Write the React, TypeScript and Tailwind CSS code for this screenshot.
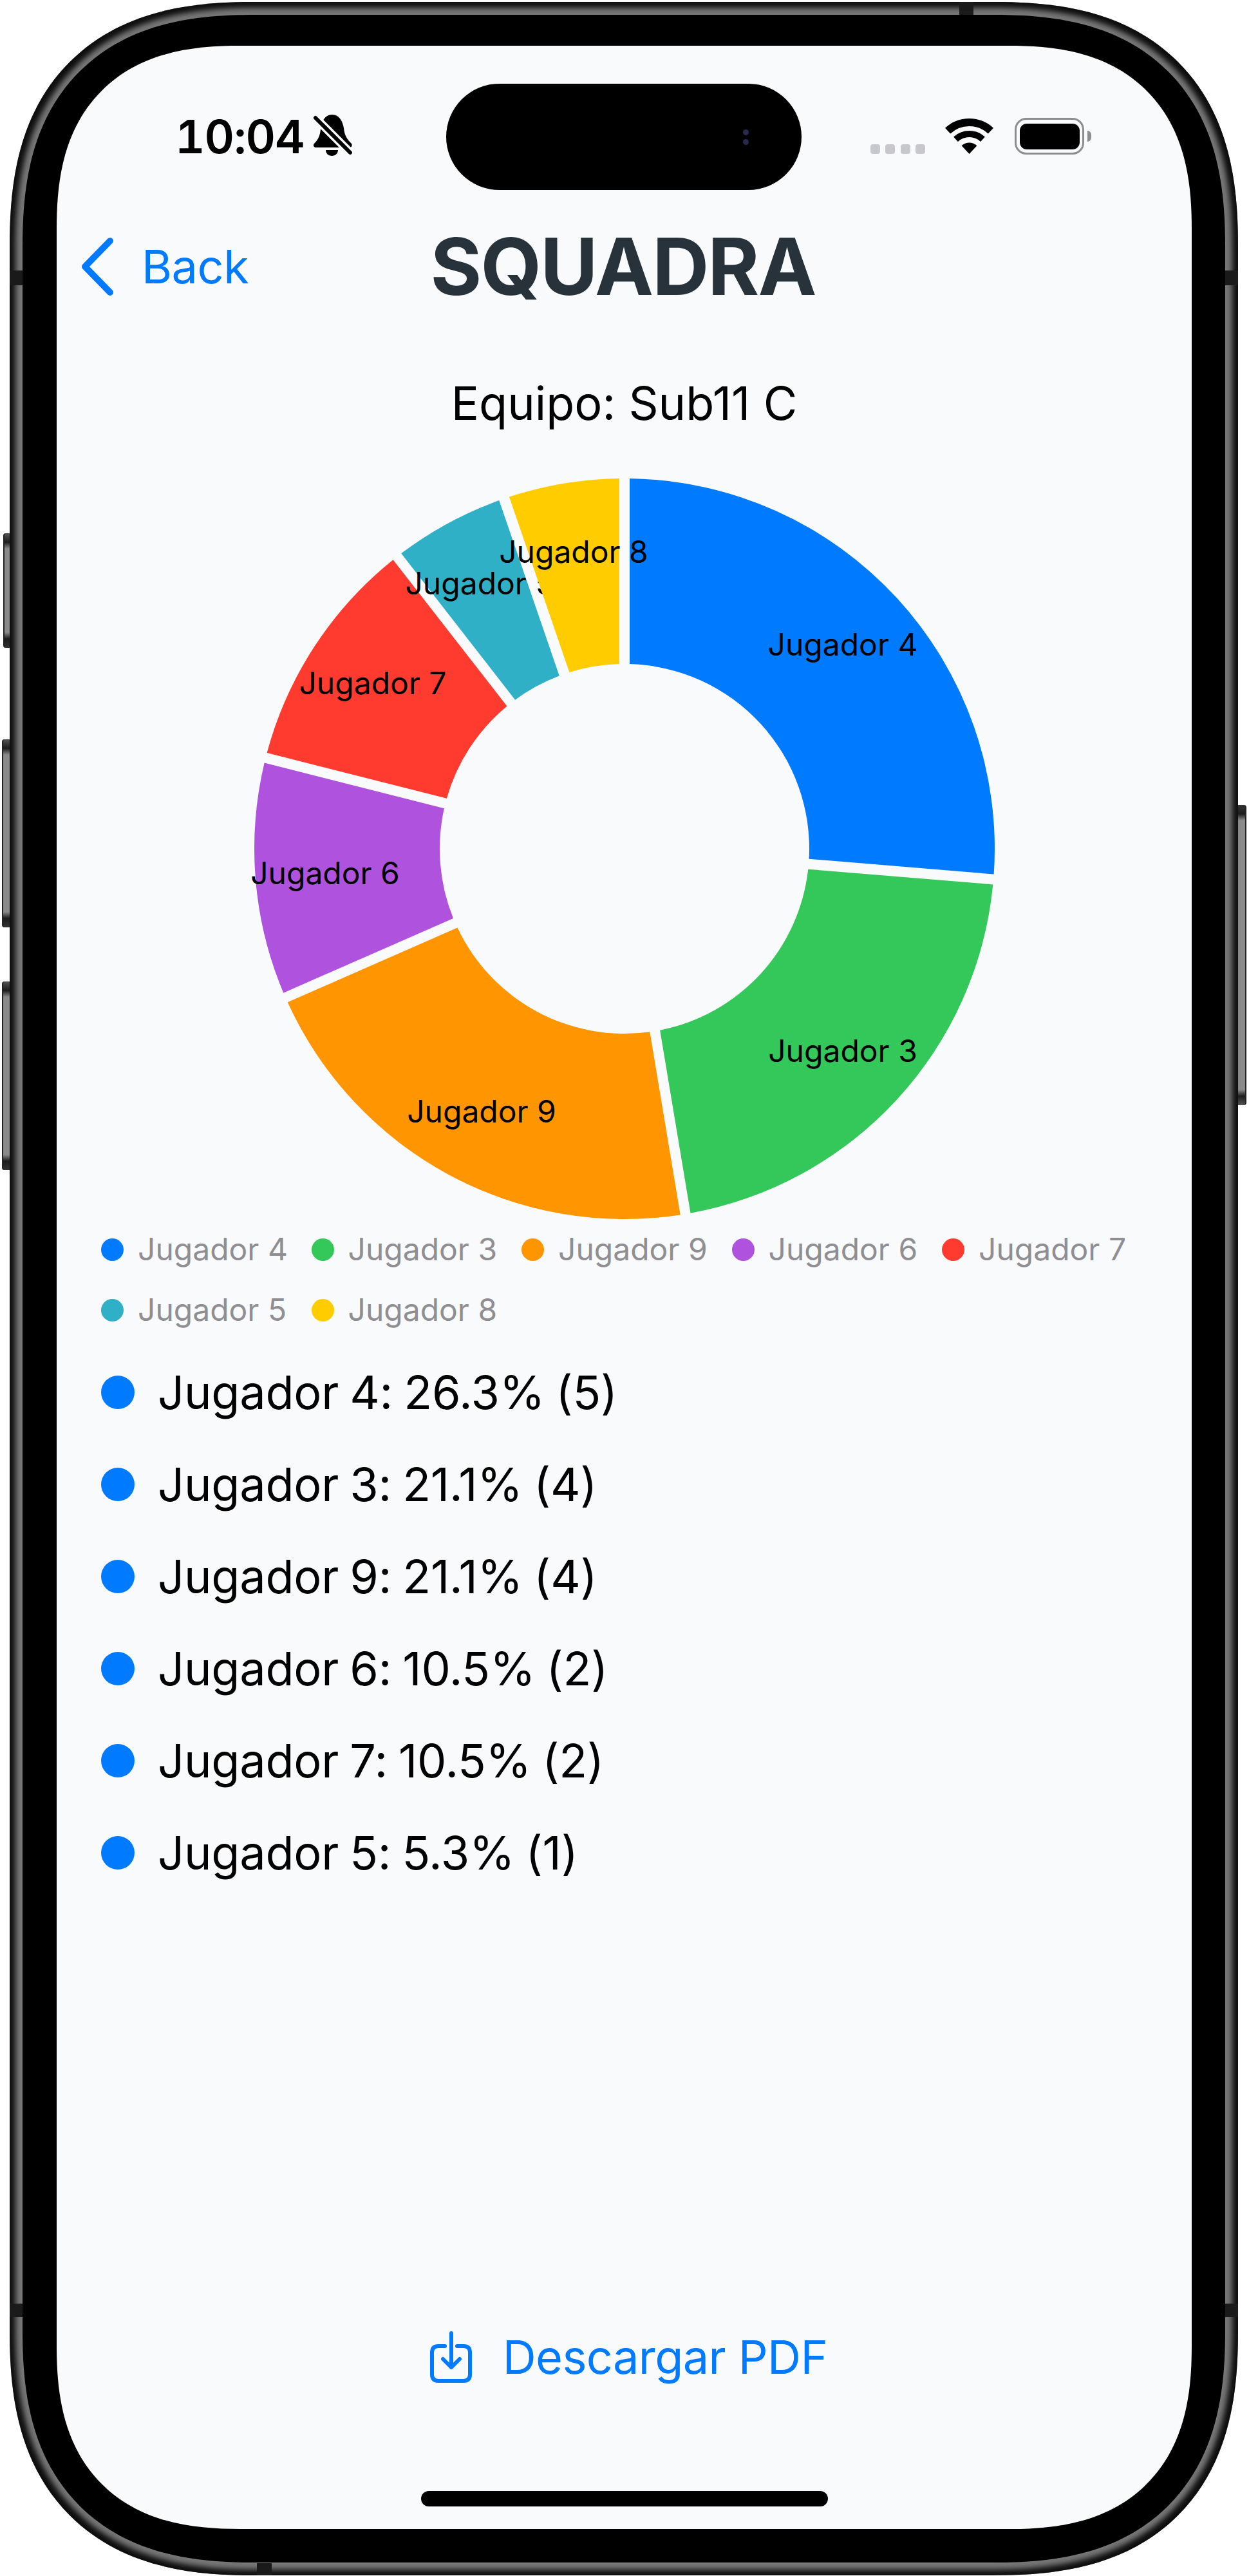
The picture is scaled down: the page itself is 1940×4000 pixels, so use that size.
import React from "react";

const slices = [
  { name: "Jugador 4", value: 5, pct: "26.3%", color: "#007AFF", x: 1309, y: 1018 },
  { name: "Jugador 3", value: 4, pct: "21.1%", color: "#34C759", x: 1309, y: 1649 },
  { name: "Jugador 9", value: 4, pct: "21.1%", color: "#FF9500", x: 748, y: 1743 },
  { name: "Jugador 6", value: 2, pct: "10.5%", color: "#AF52DE", x: 505, y: 1373 },
  { name: "Jugador 7", value: 2, pct: "10.5%", color: "#FF3B30", x: 579, y: 1078 },
  { name: "Jugador 5", value: 1, pct: "5.3%", color: "#30B0C7", x: 745, y: 923 },
  { name: "Jugador 8", value: 1, pct: "5.3%", color: "#FFCC00", x: 891, y: 874 },
];

const CX = 970;
const CY = 1318;
const R = 575;
const R0 = 287;
const GAP = 8;
const total = slices.reduce((sum, s) => sum + s.value, 0);

// angle in radians, clockwise from 12 o'clock
const polar = (r: number, a: number) => [CX + r * Math.sin(a), CY - r * Math.cos(a)];

const slicePath = (a0: number, a1: number) => {
  const [x1, y1] = polar(R, a0 + Math.asin(GAP / R));
  const [x2, y2] = polar(R, a1 - Math.asin(GAP / R));
  const [x3, y3] = polar(R0, a1 - Math.asin(GAP / R0));
  const [x4, y4] = polar(R0, a0 + Math.asin(GAP / R0));
  return `M${x1} ${y1}A${R} ${R} 0 0 1 ${x2} ${y2}L${x3} ${y3}A${R0} ${R0} 0 0 0 ${x4} ${y4}Z`;
};

function Donut() {
  let acc = 0;
  return (
    <svg viewBox="350 730 1240 1170" className="mx-auto block h-[1170px] w-[1240px] font-[Inter]">
      {slices.map((s, i) => {
        const a0 = (acc / total) * Math.PI * 2;
        acc += s.value;
        const a1 = (acc / total) * Math.PI * 2;
        const [sx1, sy1] = polar(R0 - 10, a0);
        const [sx2, sy2] = polar(R + 10, a0);
        return (
          <g key={s.name}>
            {/* last slice covers the label before it, only a sliver stays in the gap */}
            {i === slices.length - 1 && (
              <line x1={sx1 - 3} y1={sy1 - 1} x2={sx2 - 3} y2={sy2 - 1} stroke="#f9fafc" strokeWidth="12" />
            )}
            <path d={slicePath(a0, a1)} fill={s.color} />
            <text x={s.x} y={s.y} textAnchor="middle" fontSize="48" fill="#000">
              {s.name}
            </text>
          </g>
        );
      })}
    </svg>
  );
}

function BellSlash() {
  return (
    <svg viewBox="0 0 100 90" className="ml-[-5px] h-[90px] w-[100px] shrink-0">
      <path
        d="M48 11C58 11 64 20 66 32C67 44 72 50 78 56C80 60 77 62 75 62L22 62C19 62 18 58 20 56C26 50 29 44 30 34C31 20 38 11 48 11Z"
        fill="#000"
      />
      <path d="M38 66L57 66C57 72 52 75 47.500 75C43 75 38 72 38 66Z" fill="#000" />
      <path d="M22 16L76 70" stroke="#f9fafc" strokeWidth="13" />
      <path d="M22 16L76 70" stroke="#000" strokeWidth="6" strokeLinecap="round" />
    </svg>
  );
}

function Wifi() {
  return (
    <svg viewBox="0 0 75 55" className="h-[55px] w-[75px]">
      <path d="M4.100 19.200A49 49 0 0 1 70.900 19.200" fill="none" stroke="#000" strokeWidth="12" />
      <path d="M16.500 32.300A31 31 0 0 1 58.500 32.300" fill="none" stroke="#000" strokeWidth="10" />
      <path d="M37.500 55L25.600 42.200A17.500 17.500 0 0 1 49.400 42.200Z" fill="#000" />
    </svg>
  );
}

function DownloadIcon() {
  return (
    <svg viewBox="0 0 65 80" className="h-[80px] w-[65px]" fill="none" stroke="#007AFF" strokeWidth="6" strokeLinecap="round" strokeLinejoin="round">
      <path d="M23 23H13Q3 23 3 33V67Q3 77 13 77H52Q62 77 62 67V33Q62 23 52 23H42" />
      <path d="M33 3V56M20 43L33 56L46 43" />
    </svg>
  );
}

const sideKey =
  "absolute rounded-l-[4px] border-l-2 border-[#222] bg-[linear-gradient(to_bottom,#555_0,#1c1c1c_14px,#8a8a8a_24px,#8a8a8a_calc(100%-24px),#1c1c1c_calc(100%-14px),#333_100%)]";

export default function App() {
  return (
    <div className="relative h-[4000px] w-[1940px] overflow-hidden bg-white pl-[15px] pt-[3px] font-[Inter] text-black">
      {/* hardware keys */}
      <div className={`${sideKey} left-[5px] top-[828px] h-[178px] w-[10px]`} />
      <div className={`${sideKey} left-[3px] top-[1148px] h-[292px] w-[12px]`} />
      <div className={`${sideKey} left-[3px] top-[1524px] h-[293px] w-[12px]`} />
      <div className={`${sideKey} left-[1923px] top-[1250px] h-[466px] w-[13px] rotate-180`} />

      <div className="relative h-[3996px] w-[1908px] rounded-[380px] bg-[#777777] p-[20px] shadow-[inset_0_0_9px_9px_#0e0e0e] [corner-shape:superellipse(1.3)]">
        {/* antenna bands */}
        <div className="absolute left-[1475px] top-0 h-[20px] w-[22px] bg-[#1a1a1a]" />
        <div className="absolute left-[384px] top-[3977px] h-[19px] w-[23px] bg-[#1a1a1a]" />
        <div className="absolute left-0 top-[417px] h-[23px] w-[20px] bg-[#1a1a1a]" />
        <div className="absolute right-0 top-[417px] h-[23px] w-[20px] bg-[#1a1a1a]" />
        <div className="absolute left-0 top-[3574px] h-[21px] w-[20px] bg-[#1a1a1a]" />
        <div className="absolute right-0 top-[3574px] h-[21px] w-[20px] bg-[#1a1a1a]" />

        <div className="h-full w-full rounded-[360px] bg-black pb-[52px] pl-[53px] pr-[52px] pt-[48px] [corner-shape:superellipse(1.3)]">
          <div className="relative flex h-full w-full flex-col overflow-hidden rounded-[285px] bg-[#f9fafc] [corner-shape:superellipse(1.3)]">
            {/* dynamic island */}
            <div className="absolute left-[605px] top-[59px] flex h-[165px] w-[552px] items-center justify-end rounded-full bg-black pr-[82px]">
              <div className="flex flex-col gap-[6px]">
                <div className="h-[9px] w-[9px] rounded-full bg-[#29294d]" />
                <div className="h-[9px] w-[9px] rounded-full bg-[#29294d]" />
              </div>
            </div>

            {/* status bar */}
            <div className="mt-[112px] flex h-[57px] items-center justify-between pl-[184px] pr-[156px]">
              <div className="flex items-center">
                <span className="text-[72px] leading-[57px] font-semibold tracking-[-1px] tabular-nums">10:04</span>
                <BellSlash />
              </div>
              <div className="flex items-center">
                <div className="mr-[31px] flex gap-[8.500px] self-end pb-px">
                  <div className="h-[15px] w-[15px] rounded-[4px] bg-[#c7c7cc]" />
                  <div className="h-[15px] w-[15px] rounded-[4px] bg-[#c7c7cc]" />
                  <div className="h-[15px] w-[15px] rounded-[4px] bg-[#c7c7cc]" />
                  <div className="h-[15px] w-[15px] rounded-[4px] bg-[#c7c7cc]" />
                </div>
                <Wifi />
                <div className="ml-[33px] flex h-[57px] w-[108px] items-center justify-center rounded-[18px] border-[3px] border-[#8e8e8e]">
                  <div className="h-[40px] w-[93px] rounded-[11px] bg-black" />
                </div>
                <div className="ml-[5px] h-[17px] w-[6px] rounded-r-full bg-[#8e8e8e]" />
              </div>
            </div>

            {/* header */}
            <div className="mt-[110px] grid h-[128px] grid-cols-[1fr_auto_1fr] items-center">
              <div className="flex items-center pl-[38px] text-[#007AFF]">
                <svg viewBox="0 0 56 92" className="h-[92px] w-[56px]" fill="none" stroke="#007AFF" strokeWidth="10" strokeLinecap="round" strokeLinejoin="round">
                  <path d="M45 6L6 46L45 86" />
                </svg>
                <span className="ml-[38px] text-[72px] leading-none tracking-[-0.5px]">Back</span>
              </div>
              <h1 className="pr-[4px] text-[122px] leading-[128px] font-bold tracking-[-2px] text-[#27323a]">SQUADRA</h1>
              <div />
            </div>

            <p className="mt-[106px] text-center text-[72px] leading-[84px]">Equipo: Sub11 C</p>

            <div className="mt-[62px]">
              <Donut />
            </div>

            {/* legend */}
            <div className="mt-[20px] grid grid-cols-[repeat(5,326.500px)] gap-y-[54px] pl-[69px]">
              {slices.map((s) => (
                <div key={s.name} className="flex h-[40px] items-center gap-[22px] text-[48px] leading-none text-[#8e8e93]">
                  <span className="h-[35px] w-[35px] rounded-full" style={{ backgroundColor: s.color }} />
                  {s.name}
                </div>
              ))}
            </div>

            {/* detail list, last player does not fit in the original either */}
            <div className="mt-[36px] flex flex-col pl-[69px]">
              {slices.slice(0, 6).map((s) => (
                <div key={s.name} className="flex h-[143px] items-center gap-[36px] text-[72px] leading-none tracking-[-0.2px] [word-spacing:-3px]">
                  <span className="h-[52px] w-[52px] rounded-full bg-[#007AFF]" />
                  <span>
                    {s.name}: {s.pct} ({s.value})
                  </span>
                </div>
              ))}
            </div>

            <div className="mt-auto flex h-[100px] items-center justify-center gap-[48px] pl-[14px] text-[72px] leading-none tracking-[-0.6px] text-[#007AFF]">
              <DownloadIcon />
              <span>Descargar PDF</span>
            </div>

            {/* home indicator */}
            <div className="mx-auto mb-[35px] mt-[158px] h-[24px] w-[632px] rounded-full bg-black" />
          </div>
        </div>
      </div>
    </div>
  );
}
